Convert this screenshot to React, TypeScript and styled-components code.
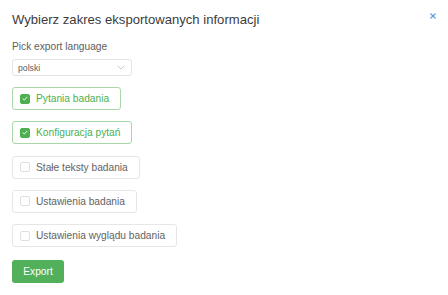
import React, { useState } from 'react';
import styled, { createGlobalStyle, css } from 'styled-components';

const GlobalStyle = createGlobalStyle`
  html, body {
    margin: 0;
    padding: 0;
    background: #ffffff;
  }
  body {
    font-family: "Liberation Sans", Arial, sans-serif;
  }
`;

type CheckProps = {
  checked?: boolean;
};

const Dialog = styled.div`
  width: 448px;
  height: 295px;
  box-sizing: border-box;
  padding: 12px 12px 0 12px;
  background: #fff;
  display: flex;
  flex-direction: column;
`;

const Header = styled.div`
  display: flex;
  justify-content: space-between;
  align-items: flex-start;
`;

const Title = styled.h2`
  margin: 0;
  font-size: 13.1px;
  line-height: 16px;
  font-weight: 400;
  color: #3c3c3c;
`;

const CloseButton = styled.button`
  border: none;
  background: none;
  padding: 0;
  margin-top: 1px;
  width: 6px;
  height: 6px;
  display: flex;
  cursor: pointer;
`;

const Label = styled.div`
  margin-top: 13px;
  font-size: 10.2px;
  line-height: 12px;
  color: #5e5e5e;
`;

const Select = styled.div`
  margin-top: 6px;
  width: 120px;
  height: 17px;
  box-sizing: border-box;
  border: 1px solid #e3e3e3;
  border-radius: 3px;
  padding: 0 6px 0 5px;
  display: flex;
  align-items: center;
  justify-content: space-between;
  font-size: 8.7px;
  color: #5e5e5e;
`;

const Options = styled.div`
  margin-top: 11px;
  display: flex;
  flex-direction: column;
  align-items: flex-start;
  gap: 11.25px;
`;

const Option = styled.label<CheckProps>`
  height: 23px;
  box-sizing: border-box;
  padding: 0 11px 0 7px;
  border-radius: 3px;
  display: flex;
  align-items: center;
  gap: 6px;
  font-size: 10.2px;
  cursor: pointer;
  ${({ checked }) =>
    checked
      ? css`
          border: 1px solid #a8d8aa;
          color: #4caf50;
        `
      : css`
          border: 1px solid #e6e6e6;
          color: #636363;
        `}
`;

const Box = styled.span<CheckProps>`
  width: 10px;
  height: 10px;
  box-sizing: border-box;
  border-radius: 2px;
  display: flex;
  align-items: center;
  justify-content: center;
  ${({ checked }) =>
    checked
      ? css`
          background: #4caf50;
          border: 1px solid #4caf50;
        `
      : css`
          background: #fff;
          border: 1px solid #e0e0e0;
        `}
`;

const ExportButton = styled.button`
  margin-top: 13px;
  width: 52px;
  height: 23px;
  border: none;
  border-radius: 3px;
  background: #52b05a;
  color: #fff;
  font-family: "Liberation Sans", Arial, sans-serif;
  font-size: 10.2px;
  padding: 0;
  cursor: pointer;
`;

const items = [
  { label: 'Pytania badania', checked: true },
  { label: 'Konfiguracja pytań', checked: true },
  { label: 'Stałe teksty badania', checked: false },
  { label: 'Ustawienia badania', checked: false },
  { label: 'Ustawienia wyglądu badania', checked: false },
];

export default function App() {
  const [state, setState] = useState(items.map((i) => i.checked));

  return (
    <>
      <GlobalStyle />
      <Dialog>
        <Header>
          <Title>Wybierz zakres eksportowanych informacji</Title>
          <CloseButton aria-label="close">
            <svg width="6" height="6" viewBox="0 0 6 6">
              <path d="M0.5 0.5 L5.5 5.5 M5.5 0.5 L0.5 5.5" stroke="#5a9be0" strokeWidth="1.1" />
            </svg>
          </CloseButton>
        </Header>
        <Label>Pick export language</Label>
        <Select>
          <span>polski</span>
          <svg width="8" height="5" viewBox="0 0 8 5">
            <path d="M0.5 0.5 L4 4 L7.5 0.5" stroke="#bbb" strokeWidth="0.8" fill="none" />
          </svg>
        </Select>
        <Options>
          {items.map((item, i) => (
            <Option
              key={item.label}
              checked={state[i]}
              onClick={() => setState(state.map((v, j) => (j === i ? !v : v)))}
            >
              <Box checked={state[i]}>
                {state[i] && (
                  <svg width="6" height="5" viewBox="0 0 6 5">
                    <path d="M0.6 2.5 L2.3 4 L5.4 0.8" stroke="#fff" strokeWidth="0.9" fill="none" />
                  </svg>
                )}
              </Box>
              {item.label}
            </Option>
          ))}
        </Options>
        <ExportButton>Export</ExportButton>
      </Dialog>
    </>
  );
}
